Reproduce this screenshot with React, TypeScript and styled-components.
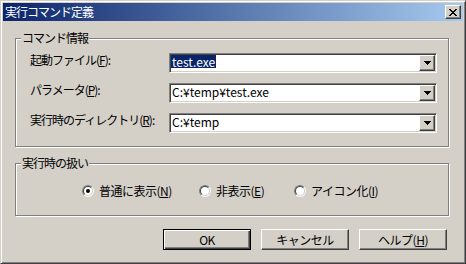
import React from "react";
import styled, { createGlobalStyle } from "styled-components";

const GlobalStyle = createGlobalStyle`
  html, body { margin: 0; padding: 0; background: #d4d0c8; }
  body {
    font-family: "Noto Sans CJK JP", "Liberation Sans", sans-serif;
    font-size: 12px;
    color: #000;
  }
  * { box-sizing: border-box; }
`;

const Window = styled.div`
  width: 466px;
  height: 264px;
  display: flex;
  flex-direction: column;
  background: #d4d0c8;
  border: 1px solid;
  border-color: #d4d0c8 #404040 #404040 #d4d0c8;
  box-shadow: inset 1px 1px 0 #fff, inset -1px -1px 0 #808080;
  padding: 2px;
`;

const TitleBar = styled.div`
  height: 18px;
  flex: none;
  display: flex;
  align-items: center;
  justify-content: space-between;
  padding: 0 2px;
  background: linear-gradient(to right, #0a246a, #a6caf0);
  color: #fff;
`;

const TitleText = styled.span`
  font-size: 12px;
  line-height: 18px;
  letter-spacing: -1px;
  white-space: nowrap;
`;

const RaisedButton = styled.div`
  display: flex;
  align-items: center;
  justify-content: center;
  background: #d4d0c8;
  border: 1px solid;
  border-color: #fff #404040 #404040 #fff;
  box-shadow: inset -1px -1px 0 #808080;
`;

const CloseButton = styled(RaisedButton)`
  width: 16px;
  height: 14px;
`;

const Body = styled.div`
  flex: 1;
  display: flex;
  flex-direction: column;
  padding: 9px 14px 0 12px;
`;

const Group = styled.fieldset<{ $gap?: number }>`
  margin: ${(p) => p.$gap ?? 0}px 0 0 0;
  padding: 0;
  min-width: 0;
  border: 1px solid #808080;
  box-shadow: 1px 1px 0 #fff, inset 1px 1px 0 #fff;
`;

const Legend = styled.legend`
  margin-left: 5px;
  padding: 0 1px;
  background: #d4d0c8;
  font-size: 12px;
  line-height: 16px;
  letter-spacing: -1px;
`;

const FormGrid = styled.div`
  display: grid;
  grid-template-columns: 139px 268px;
  row-gap: 10px;
  padding: 7px 11px 13px 14px;
`;

const Label = styled.div`
  height: 20px;
  display: flex;
  align-items: center;
  padding-bottom: 6px;
  white-space: nowrap;
  line-height: 14px;
  letter-spacing: -1px;
`;

const Key = styled.span`
  text-decoration: underline;
  text-underline-offset: 1px;
`;

const Combo = styled.div`
  width: 268px;
  height: 20px;
  display: flex;
  background: #fff;
  border: 1px solid;
  border-color: #808080 #fff #fff #808080;
  box-shadow: inset 1px 1px 0 #404040, inset -1px -1px 0 #d4d0c8;
  padding: 1px;
`;

const ComboField = styled.div`
  flex: 1;
  min-width: 0;
  display: flex;
  align-items: flex-start;
`;

const ComboValue = styled.span<{ $selected?: boolean }>`
  display: inline-block;
  height: 13px;
  line-height: 13px;
  padding: 0 1px;
  white-space: nowrap;
  background: ${(p) => (p.$selected ? "#0a246a" : "transparent")};
  color: ${(p) => (p.$selected ? "#fff" : "#000")};
`;

const DropButton = styled(RaisedButton)`
  width: 16px;
  height: 16px;
  flex: none;
`;

const RadioRow = styled.div`
  display: grid;
  grid-template-columns: 117px 95px auto;
  align-items: center;
  padding: 12px 0 16px 66px;
`;

const RadioItem = styled.label`
  display: flex;
  align-items: center;
  gap: 5px;
  height: 16px;
  line-height: 16px;
  white-space: nowrap;
  letter-spacing: -0.5px;
`;

const RadioCircle = styled.span<{ $checked?: boolean }>`
  position: relative;
  width: 12px;
  height: 12px;
  flex: none;
  border-radius: 50%;
  border: 1px solid;
  border-color: #808080 #fff #fff #808080;
  &::before {
    content: "";
    position: absolute;
    inset: 0;
    border-radius: 50%;
    border: 1px solid;
    border-color: #404040 #d4d0c8 #d4d0c8 #404040;
    background: #fff;
  }
  &::after {
    content: "";
    position: absolute;
    left: 3px;
    top: 3px;
    width: 4px;
    height: 4px;
    border-radius: 50%;
    background: #000;
    display: ${(p) => (p.$checked ? "block" : "none")};
  }
`;

const ButtonRow = styled.div`
  display: flex;
  justify-content: flex-end;
  gap: 10px;
  margin-top: 13px;
  margin-right: 2px;
`;

const PushButton = styled.div<{ $default?: boolean }>`
  width: 88px;
  height: 21px;
  display: flex;
  align-items: center;
  justify-content: center;
  background: #d4d0c8;
  font-size: 12px;
  letter-spacing: -0.5px;
  white-space: nowrap;
  border: 1px solid;
  border-color: ${(p) => (p.$default ? "#000" : "#fff #404040 #404040 #fff")};
  box-shadow: ${(p) =>
    p.$default
      ? "inset 1px 1px 0 #fff, inset -1px -1px 0 #404040, inset -2px -2px 0 #808080"
      : "inset -1px -1px 0 #808080"};
`;

const CloseGlyph = () => (
  <svg width="8" height="7" viewBox="0 0 8 7" shapeRendering="crispEdges">
    {Array.from({ length: 7 }).map((_, i) => (
      <React.Fragment key={i}>
        <rect x={i} y={i} width={2} height={1} fill="#000" />
        <rect x={6 - i} y={i} width={2} height={1} fill="#000" />
      </React.Fragment>
    ))}
  </svg>
);

const ArrowGlyph = () => (
  <svg width="7" height="4" viewBox="0 0 7 4" shapeRendering="crispEdges">
    <rect x={0} y={0} width={7} height={1} fill="#000" />
    <rect x={1} y={1} width={5} height={1} fill="#000" />
    <rect x={2} y={2} width={3} height={1} fill="#000" />
    <rect x={3} y={3} width={1} height={1} fill="#000" />
  </svg>
);

const ComboBox = ({ value, selected }: { value: string; selected?: boolean }) => (
  <Combo>
    <ComboField>
      <ComboValue $selected={selected}>{value}</ComboValue>
    </ComboField>
    <DropButton>
      <ArrowGlyph />
    </DropButton>
  </Combo>
);

const fields = [
  { label: "起動ファイル", key: "F", value: "test.exe", selected: true },
  { label: "パラメータ", key: "P", value: "C:¥temp¥test.exe" },
  { label: "実行時のディレクトリ", key: "R", value: "C:¥temp" },
];

const radios = [
  { label: "普通に表示", key: "N", checked: true },
  { label: "非表示", key: "E" },
  { label: "アイコン化", key: "I" },
];

export default function App() {
  return (
    <>
      <GlobalStyle />
      <Window>
        <TitleBar>
          <TitleText>実行コマンド定義</TitleText>
          <CloseButton>
            <CloseGlyph />
          </CloseButton>
        </TitleBar>
        <Body>
          <Group>
            <Legend>コマンド情報</Legend>
            <FormGrid>
              {fields.map((f) => (
                <React.Fragment key={f.key}>
                  <Label>
                    {f.label}(<Key>{f.key}</Key>):
                  </Label>
                  <ComboBox value={f.value} selected={f.selected} />
                </React.Fragment>
              ))}
            </FormGrid>
          </Group>
          <Group $gap={8}>
            <Legend>実行時の扱い</Legend>
            <RadioRow>
              {radios.map((r) => (
                <RadioItem key={r.key}>
                  <RadioCircle $checked={r.checked} />
                  <span>
                    {r.label}(<Key>{r.key}</Key>)
                  </span>
                </RadioItem>
              ))}
            </RadioRow>
          </Group>
          <ButtonRow>
            <PushButton $default>OK</PushButton>
            <PushButton>キャンセル</PushButton>
            <PushButton>
              ヘルプ(<Key>H</Key>)
            </PushButton>
          </ButtonRow>
        </Body>
      </Window>
    </>
  );
}
